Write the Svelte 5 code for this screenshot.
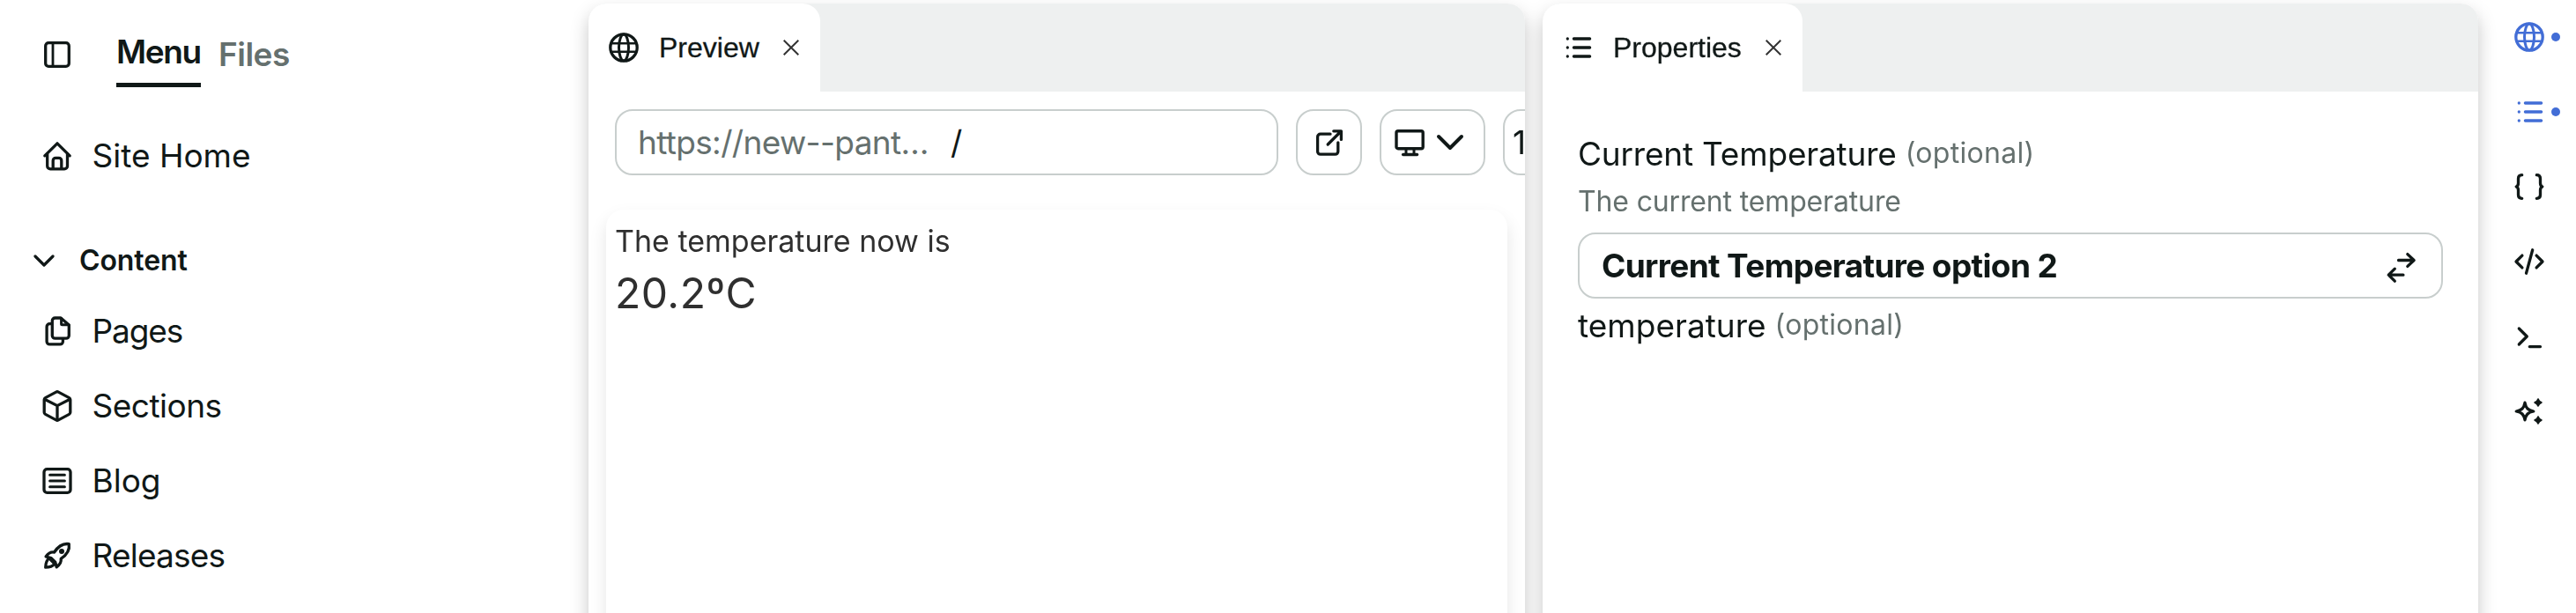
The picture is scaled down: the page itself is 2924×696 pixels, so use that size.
<script>
  const nav = [
    { icon: 'pages', label: 'Pages', spacing: -1.1 },
    { icon: 'cube', label: 'Sections', spacing: -0.5 },
    { icon: 'blog', label: 'Blog', spacing: 0 },
    { icon: 'rocket', label: 'Releases', spacing: -0.8 },
  ];
  const rail = [
    { icon: 'globe', active: true },
    { icon: 'list', active: true },
    { icon: 'braces' },
    { icon: 'code' },
    { icon: 'terminal' },
    { icon: 'sparkle' },
  ];
</script>

{#snippet icon(name)}
  <svg class="icon" viewBox="0 0 40 40" width="40" height="40" fill="none" stroke="currentColor" stroke-width="3.3" stroke-linecap="round" stroke-linejoin="round">
    {#if name === 'sidebar'}
      <rect x="6.7" y="6.7" width="26.6" height="26.6" rx="3.4" />
      <path d="M15 7v26" stroke-width="2.8" />
    {:else if name === 'home'}
      <path d="M5.8 19.8 20 5.8l14.2 14" />
      <path d="M8.7 18v13.4a3.4 3.4 0 0 0 3.4 3.4h16a3.4 3.4 0 0 0 3.4-3.4V18" />
      <path d="M15.2 34V25.4a3 3 0 0 1 3-3h3.6a3 3 0 0 1 3 3V34" />
    {:else if name === 'pages'}
      <path d="M24 5H17.500a3.200 3.200 0 0 0-3.200 3.200V25a3.200 3.200 0 0 0 3.200 3.200H30.100a3.200 3.200 0 0 0 3.200-3.200V13z" />
      <path d="M24.600 5.500v6.300a1 1 0 0 0 1 1H33" stroke-width="3" />
      <path d="M13.500 11.700h-2.200a3.200 3.200 0 0 0-3.200 3.200V31.700a3.200 3.200 0 0 0 3.200 3.200H23.200a3.200 3.200 0 0 0 3.200-3.200V29" />
    {:else if name === 'cube'}
      <path d="M18.700 4.100a2.800 2.800 0 0 1 2.600 0L33.500 10.600a2.400 2.400 0 0 1 1.300 2.100V27.300a2.400 2.400 0 0 1-1.300 2.100L21.300 35.900a2.800 2.800 0 0 1-2.600 0L6.500 29.400a2.400 2.400 0 0 1-1.300-2.100V12.700a2.400 2.400 0 0 1 1.300-2.100z" />
      <path d="M6 12.500 20 19.600l14-7.100M20 19.600V35.500" />
    {:else if name === 'blog'}
      <rect x="5" y="6.600" width="30" height="26.800" rx="3.400" />
      <path d="M11.600 13.300h16.800M11.600 20h16.800M11.600 26.700h16.800" stroke-width="3" />
    {:else if name === 'rocket'}
      <path d="M33.300 6.700C27.500 5.800 21.500 8.600 16.600 16c-4-.7-7.200 1.600-9.500 5l6 1.600 4.600 4.600 1.500 5.600c3.400-2.400 5.600-5.500 5-9.500C31.600 18.400 34.200 12.500 33.300 6.700z" />
      <path d="M10.600 23c-2.600 2-3.800 5.500-3.900 10.200 4.800 0 8.200-1.400 10.200-3.900M12.500 24.500l4 4" />
      <circle cx="25" cy="15" r="3" fill="currentColor" stroke="none" />
    {:else if name === 'globe'}
      <circle cx="20" cy="20" r="15.200" />
      <ellipse cx="20" cy="20" rx="5.500" ry="15" stroke-width="3" />
      <path d="M5.800 15.200h28.400M5.800 24.800h28.400" stroke-width="2.500" stroke-linecap="butt" />
    {:else if name === 'list'}
      <path d="M15.400 10h18.200M15.400 20h18.200M15.400 30h18.200M8.300 10h.01M8.300 20h.01M8.300 30h.01" />
    {:else if name === 'braces'}
      <path d="M11.700 6.700c-3 0-4.200 1.500-4.200 4V16c0 2.500-.8 3.400-2.300 4 1.500.6 2.300 1.500 2.300 4v5.300c0 2.500 1.200 4 4.200 4M28.300 6.700c3 0 4.200 1.500 4.200 4V16c0 2.500.8 3.400 2.300 4-1.500.6-2.300 1.500-2.300 4v5.300c0 2.500-1.200 4-4.200 4" />
    {:else if name === 'code'}
      <path d="M11.900 13.100 5 20l6.900 6.900M28.100 13.100 35 20l-6.900 6.900M23.700 6.800 16.500 33.200" />
    {:else if name === 'terminal'}
      <path d="M8.300 11 17.300 20l-9 9M20.300 31.600h12.200" />
    {:else if name === 'sparkle'}
      <path d="M15 10.200c1.200 6.300 3.500 8.600 9.800 9.800-6.300 1.200-8.600 3.500-9.800 9.800C13.800 23.500 11.500 21.200 5.200 20 11.500 18.800 13.800 16.500 15 10.200z" />
      <path d="M30 6.300c.7 2.200 1.500 3 3.700 3.700-2.200.7-3 1.500-3.700 3.700-.7-2.200-1.500-3-3.700-3.700 2.200-.7 3-1.500 3.700-3.700zM30 26.300c.7 2.200 1.500 3 3.700 3.700-2.200.7-3 1.500-3.700 3.700-.7-2.200-1.500-3-3.700-3.700 2.200-.7 3-1.500 3.700-3.700z" fill="currentColor" stroke-width="2" />
    {:else if name === 'open'}
      <path d="M21 10.200H9.800a3.200 3.200 0 0 0-3.200 3.200V30a3.200 3.200 0 0 0 3.200 3.200H26.600a3.200 3.200 0 0 0 3.200-3.200V19.800M18.200 22 33.200 7M24.800 6.800h8.600v9.600" stroke-width="3.300" />
    {:else if name === 'monitor'}
      <rect x="5" y="6.700" width="30.200" height="20" rx="2" stroke-width="3.400" />
      <path d="M16 27.500v5M25 27.500v5" stroke-width="3" />
      <path d="M12.600 33.500h16" />
    {:else if name === 'swap'}
      <path d="M17.500 13.500H34.500M27.800 6.600l7.300 6.900-7.300 6.900M22.900 30.200H6.500M13.300 23.200 6.200 30.200l7.100 7" />
    {/if}
  </svg>
{/snippet}

{#snippet tab(name, label)}
  <div class="tabs">
    <div class="tab">
      {@render icon(name)}
      <span class="tab-label">{label}</span>
      <svg class="close" viewBox="0 0 18 18" width="18" height="18"><path d="M.7.7l16.600 16.600M17.300.7.7 17.300" /></svg>
    </div>
  </div>
{/snippet}

<div class="app">
  <aside class="sidebar">
    <header>
      {@render icon('sidebar')}
      <span class="mode current">Menu</span>
      <span class="mode files">Files</span>
    </header>
    <div class="item home">{@render icon('home')}<span>Site Home</span></div>
    <div class="group">
      <svg viewBox="0 0 24 14" width="24" height="14"><path d="M2 2l10 10L22 2" /></svg>
      <span>Content</span>
    </div>
    <nav>
      {#each nav as n}
        <div class="item">{@render icon(n.icon)}<span style="letter-spacing:{n.spacing}px">{n.label}</span></div>
      {/each}
    </nav>
  </aside>

  <main>
    <section class="panel">
      {@render tab('globe', 'Preview')}
      <div class="toolbar">
        <div class="box url"><span class="host">https://new--pant…</span><span class="path">/</span></div>
        <div class="box open">{@render icon('open')}</div>
        <div class="box device">
          {@render icon('monitor')}
          <svg class="down" viewBox="0 0 32 20" width="32" height="20"><path d="M3 3l13 13L29 3" /></svg>
        </div>
        <div class="box zoom">1</div>
      </div>
      <div class="canvas">
        <div class="lead">The temperature now is</div>
        <div class="value">20.2ºC</div>
      </div>
    </section>

    <section class="panel props">
      {@render tab('list', 'Properties')}
      <div class="form">
        <div class="field"><span class="name">Current Temperature</span><span class="opt">(optional)</span></div>
        <div class="hint">The current temperature</div>
        <div class="box select"><span>Current Temperature option 2</span>{@render icon('swap')}</div>
        <div class="field second"><span class="name lower">temperature</span><span class="opt">(optional)</span></div>
      </div>
    </section>
  </main>

  <div class="rail">
    {#each rail as r}
      <div class="tool" class:active={r.active}>
        {@render icon(r.icon)}
        {#if r.active}<i></i>{/if}
      </div>
    {/each}
  </div>
</div>

<style>
  :global(body) { background: #fff; overflow: hidden; }
  .app { display: flex; width: 2924px; height: 696px; overflow: hidden; color: #101817; font: 400 37px/48px Inter, sans-serif; white-space: nowrap; background: #fff; }
  .app :global(*) { box-sizing: border-box; }
  svg { display: block; flex: none; }

  .sidebar { width: 668px; flex: none; display: flex; flex-direction: column; }
  header { display: flex; align-items: flex-start; height: 99px; padding-left: 45px; }
  header .icon { margin-top: 42px; }
  .mode { font-weight: 600; }
  .current { margin-left: 47px; width: 96px; height: 99px; padding-top: 35px; border-bottom: 5px solid #101817; letter-spacing: -1.4px; }
  .files { margin-left: 20px; padding-top: 38px; color: #65706e; letter-spacing: -.5px; }
  .item { display: flex; align-items: center; gap: 19.500px; height: 85px; padding: 0 0 1px 45px; }
  .home { margin-top: 36px; }
  .group { display: flex; align-items: center; height: 60px; margin-top: 46px; padding-left: 38px; gap: 28px; font-weight: 600; font-size: 32px; letter-spacing: -.1px; }
  .group path { fill: none; stroke: #101817; stroke-width: 3.200; stroke-linecap: round; stroke-linejoin: round; }
  nav { margin-top: 8px; }

  main { display: flex; gap: 20px; flex: none; height: 780px; padding-top: 4px; filter: drop-shadow(0 10px 10px rgba(0, 0, 0, .22)); }
  .panel { width: 1063px; background: #fff; border-radius: 20px 20px 0 0; overflow: hidden; display: flex; flex-direction: column; }
  .props { width: 1062px; }
  .tabs { display: flex; flex: none; height: 100px; background: #eef0f0; }
  .tab { display: flex; align-items: flex-start; background: #fff; border-radius: 20px 20px 0 0; padding: 30px 24px 0 20px; }
  .tab-label { margin: -4px 27px 0 20px; font-family: "Liberation Sans", Arial, sans-serif; font-size: 32px; line-height: 48px; -webkit-text-stroke: .3px; }
  .close { margin-top: 11px; }
  .close path { stroke: #333; stroke-width: 2; fill: none; }

  .toolbar { display: flex; flex: none; gap: 20px; padding: 20px 0 0 30px; }
  .box { display: flex; flex: none; align-items: center; height: 75px; border: 2px solid #c8cecd; border-radius: 20px; background: #fff; }
  .url { width: 753px; padding-left: 24px; }
  .host { width: 355px; color: #65706e; letter-spacing: -.65px; }
  .open { width: 75px; padding-left: 16px; }
  .device { width: 120px; padding-left: 12px; gap: 10px; }
  .down path { fill: none; stroke: #101817; stroke-width: 4; stroke-linecap: round; stroke-linejoin: round; }
  .zoom { width: 150px; padding-left: 9px; }
  .canvas { flex: 1; margin: 39px 20px 0; padding: 10px; border-radius: 20px; color: #2f2f2f; box-shadow: 0 10px 20px rgba(0, 0, 0, .1); }
  .lead { font-size: 34px; line-height: 52px; }
  .value { font-size: 48px; line-height: 66px; letter-spacing: .5px; }

  .form { padding: 46px 40px 0; }
  .field { display: flex; align-items: center; gap: 10px; height: 50px; }
  .name { letter-spacing: -.2px; }
  .lower { letter-spacing: 0; }
  .opt { font-size: 32px; line-height: 48px; color: #65706e; letter-spacing: .3px; margin-top: -3px; }
  .hint { font-size: 32px; line-height: 58px; height: 58px; color: #65706e; letter-spacing: -.15px; }
  .select { margin-top: 6px; width: 982px; padding: 0 26px 0 25px; justify-content: space-between; font-weight: 700; letter-spacing: -.65px; }
  .second { margin-top: 6px; }

  .rail { width: 111px; padding-left: 38px; }
  .tool { display: flex; align-items: center; height: 85px; padding-bottom: 1px; gap: 5px; }
  .active { color: #426dd6; }
  .active i { width: 10px; height: 10px; border-radius: 50%; background: #426dd6; }
</style>
